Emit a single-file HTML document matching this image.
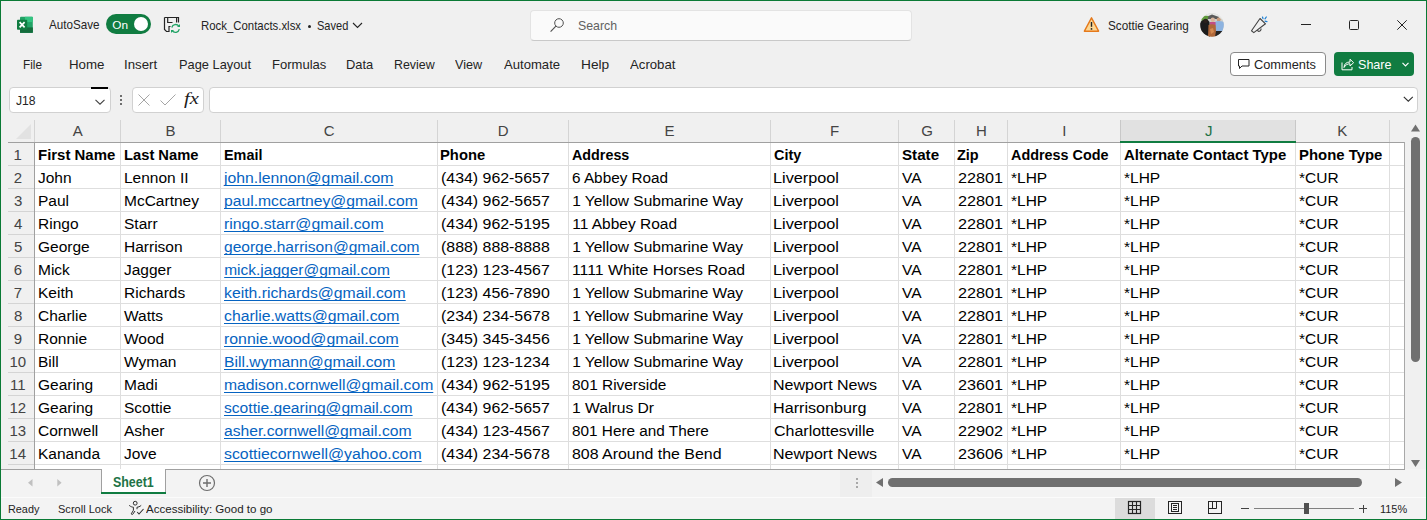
<!DOCTYPE html><html><head><meta charset="utf-8"><style>
html,body{margin:0;padding:0;}
body{width:1427px;height:520px;overflow:hidden;position:relative;background:#f0f0f0;font-family:"Liberation Sans", sans-serif;}
.t{position:absolute;white-space:nowrap;line-height:1;transform-origin:0 0;}
.r{position:absolute;box-sizing:border-box;}
svg{position:absolute;overflow:visible;}
</style></head><body>
<svg style="left:16px;top:16px" width="18" height="18" viewBox="0 0 18 18"><rect x="4" y="0.8" width="12.8" height="16" rx="1" fill="#21a366"/>
<rect x="9" y="0.8" width="7.8" height="5.3" fill="#33c481"/>
<rect x="4" y="11.5" width="12.8" height="5.3" fill="#107c41"/>
<rect x="4" y="11.5" width="12.8" height="5.3" fill="#185c37" opacity="0.5"/>
<rect x="1" y="3.8" width="10.2" height="10" rx="0.8" fill="#107c41"/>
<path d="M3.6 6.2 L8.6 11.4 M8.6 6.2 L3.6 11.4" stroke="#fff" stroke-width="1.7"/></svg>
<div class="t" style="left:49.00px;top:19.00px;font-size:12.7px;color:#242424;transform:scaleX(0.917717453150524);">AutoSave</div>
<div class="r" style="left:106px;top:14px;width:45px;height:20px;background:#107c41;border-radius:10px;"></div>
<div class="r" style="left:134px;top:17px;width:14px;height:14px;background:#fff;border-radius:50%;"></div>
<div class="t" style="left:112.21px;top:20.00px;font-size:11.8px;color:#fff;">On</div>
<svg style="left:155px;top:10px" width="35" height="30" viewBox="0 0 35 30"><path d="M9.5 7.5 H23.5 V12.5 M9.5 7.5 V19.5 L11.5 21.5 H14 V16.5 H15.5 M12.7 7.5 V12.5 H17.5 M21.6 7.5 V12.5" fill="none" stroke="#242424" stroke-width="1.2"/>
<path d="M16.8 17.5 A3.9 3.9 0 0 1 23.8 16.2" fill="none" stroke="#21a366" stroke-width="1.3"/>
<path d="M24.3 19.2 A3.9 3.9 0 0 1 17.2 20.6" fill="none" stroke="#21a366" stroke-width="1.3"/>
<path d="M25 14 V17 H22 Z" fill="#21a366"/>
<path d="M16 23 V20 H19 Z" fill="#21a366"/></svg>
<div class="t" style="left:200.69px;top:20.00px;font-size:12.7px;color:#242424;transform:scaleX(0.8979458695396102);">Rock_Contacts.xlsx</div>
<div class="r" style="left:308px;top:24.5px;width:3px;height:3px;background:#242424;border-radius:50%;"></div>
<div class="t" style="left:316.55px;top:20.00px;font-size:12.7px;color:#242424;transform:scaleX(0.8713524779990728);">Saved</div>
<svg style="left:352px;top:22px" width="11" height="7" viewBox="0 0 11 7"><path d="M1 1 L5.5 5.5 L10 1" fill="none" stroke="#242424" stroke-width="1.1"/></svg>
<div class="r" style="left:530px;top:10px;width:382px;height:31px;background:#fafafa;border:1px solid #e3e3e3;border-bottom-color:#c9c9c9;border-radius:4px;"></div>
<svg style="left:549px;top:17px" width="16" height="16" viewBox="0 0 16 16"><circle cx="10" cy="6" r="4.3" fill="none" stroke="#505050" stroke-width="1"/><path d="M6.9 9.1 L1.6 14.6" stroke="#505050" stroke-width="1.1"/></svg>
<div class="t" style="left:577.98px;top:20.00px;font-size:12.6px;color:#616161;transform:scaleX(0.9784022898777003);">Search</div>
<svg style="left:1083px;top:16px" width="17" height="17" viewBox="0 0 17 17"><path d="M8.5 1.8 L15.6 15.2 H1.4 Z" fill="#fcd794" stroke="#e5791b" stroke-width="1.4" stroke-linejoin="round"/><path d="M8.5 6 V10.8" stroke="#242424" stroke-width="1.4"/><circle cx="8.5" cy="12.9" r="0.9" fill="#242424"/></svg>
<div class="t" style="left:1108.41px;top:19.00px;font-size:13.0px;color:#242424;transform:scaleX(0.9019741320626277);">Scottie Gearing</div>
<svg style="left:1200px;top:12.5px" width="24" height="24" viewBox="0 0 24 24"><defs><clipPath id="av"><circle cx="12" cy="12" r="11.8"/></clipPath></defs>
<g clip-path="url(#av)">
<rect width="24" height="24" fill="#cfcfca"/>
<rect x="0" y="0" width="24" height="6" fill="#e6e8e6"/>
<path d="M6 4 L12 1.5 L19 4 L18 6 L7 6 Z" fill="#5a5a5a"/>
<path d="M0.5 6 Q3 1.5 8.5 3 L7.5 7 L2 8 Z" fill="#5f9a3c"/>
<path d="M0 10 Q3 5.5 7.5 6.5 L9.5 9 L10 24 L0 24 Z" fill="#1c1c1c"/>
<circle cx="5.5" cy="8" r="2.2" fill="#2a211c"/>
<circle cx="12.8" cy="6.8" r="2.2" fill="#d9b59c"/>
<path d="M10 9 L16 9 L16.5 14 L10 14 Z" fill="#c04d86"/>
<path d="M8.5 12 Q12 10.5 16.5 12.5 L17 24 L8 24 Z" fill="#b0683a"/>
<path d="M10 16 L13 15 L14 19 L11 21 Z" fill="#d48a50"/>
<circle cx="18.7" cy="6.5" r="2" fill="#c89a7c"/>
<path d="M15.5 8.5 Q19 7.5 24 9 L24 18 L16 18 Z" fill="#8db3e0"/>
<path d="M16 18 L24 18 L24 24 L15 24 Z" fill="#222"/>
</g></svg>
<svg style="left:1250px;top:16px" width="18" height="18" viewBox="0 0 18 18"><path d="M1.5 14.8 L10 2.5 L15.5 7.8 L3.8 16.6 Z" fill="none" stroke="#424242" stroke-width="1.1" stroke-linejoin="round"/><path d="M7.3 14.2 A1.9 1.9 0 1 0 10.8 12.4" fill="none" stroke="#424242" stroke-width="1.1"/><path d="M12.5 1 L13 2.6 M16.3 1 L15 2.8 M15 5.2 L17 5.6" stroke="#1a7fd4" stroke-width="1.2" stroke-linecap="round"/></svg>
<div class="r" style="left:1301px;top:24px;width:10px;height:1px;background:#242424;"></div>
<div class="r" style="left:1349px;top:20px;width:10px;height:10px;border:1px solid #242424;border-radius:1.5px;"></div>
<svg style="left:1397px;top:20px" width="10" height="10" viewBox="0 0 10 10"><path d="M0.3 0.3 L9.7 9.7 M9.7 0.3 L0.3 9.7" stroke="#242424" stroke-width="1"/></svg>
<div class="t" style="left:22.76px;top:58.00px;font-size:13.4px;color:#242424;transform:scaleX(0.8764900330561957);">File</div>
<div class="t" style="left:68.54px;top:58.00px;font-size:13.4px;color:#242424;transform:scaleX(0.9930661652368084);">Home</div>
<div class="t" style="left:123.81px;top:58.00px;font-size:13.4px;color:#242424;transform:scaleX(0.988805970149254);">Insert</div>
<div class="t" style="left:178.97px;top:58.00px;font-size:13.4px;color:#242424;transform:scaleX(0.9581387816793069);">Page Layout</div>
<div class="t" style="left:271.76px;top:58.00px;font-size:13.4px;color:#242424;transform:scaleX(0.9747558503777405);">Formulas</div>
<div class="t" style="left:346.17px;top:58.00px;font-size:13.4px;color:#242424;transform:scaleX(0.9631644732004995);">Data</div>
<div class="t" style="left:394.01px;top:58.00px;font-size:13.4px;color:#242424;transform:scaleX(0.9258395522388057);">Review</div>
<div class="t" style="left:454.77px;top:58.00px;font-size:13.4px;color:#242424;transform:scaleX(0.9415539126795927);">View</div>
<div class="t" style="left:504.00px;top:58.00px;font-size:13.4px;color:#242424;transform:scaleX(0.9785975781470012);">Automate</div>
<div class="t" style="left:581.20px;top:58.00px;font-size:13.4px;color:#242424;transform:scaleX(1.0246693991183975);">Help</div>
<div class="t" style="left:630.20px;top:58.00px;font-size:13.4px;color:#242424;transform:scaleX(0.9849010760152719);">Acrobat</div>
<div class="r" style="left:1230px;top:52px;width:96px;height:24px;background:#fff;border:1px solid #8a8a8a;border-radius:4px;"></div>
<svg style="left:1237px;top:58px" width="14" height="12" viewBox="0 0 14 12"><path d="M1.5 1.5 H12 V8 H5 L2.5 10.5 V8 H1.5 Z" fill="none" stroke="#242424" stroke-width="1" stroke-linejoin="round"/></svg>
<div class="t" style="left:1253.96px;top:58.00px;font-size:13.2px;color:#242424;transform:scaleX(0.9712918660287095);">Comments</div>
<div class="r" style="left:1334px;top:52px;width:80px;height:24px;background:#107c41;border-radius:4px;"></div>
<svg style="left:1341px;top:57px" width="14" height="14" viewBox="0 0 14 14"><path d="M1 5.5 V12.8 H11 V10" fill="none" stroke="#fff" stroke-width="1"/><path d="M3 10.5 C3.2 6.8 5.5 5 9 5 V2.2 L12.6 5.7 L9 9 V6.8 C6.5 6.8 4.5 7.8 3 10.5 Z" fill="none" stroke="#fff" stroke-width="1" stroke-linejoin="round"/></svg>
<div class="t" style="left:1357.77px;top:58.00px;font-size:13.4px;color:#fff;transform:scaleX(0.9379174168070141);">Share</div>
<svg style="left:1402px;top:62px" width="7" height="5" viewBox="0 0 7 5"><path d="M0.5 0.8 L3.5 3.8 L6.5 0.8" fill="none" stroke="#fff" stroke-width="1.2"/></svg>
<div class="r" style="left:9px;top:87px;width:102px;height:26px;background:#fff;border:1px solid #d1d1d1;border-radius:4px;"></div>
<div class="r" style="left:91px;top:87px;width:17px;height:1.5px;background:#000;"></div>
<div class="t" style="left:15.76px;top:95.00px;font-size:12.8px;color:#242424;transform:scaleX(0.95);">J18</div>
<svg style="left:95px;top:98.5px" width="10" height="6" viewBox="0 0 10 6"><path d="M0.5 0.8 L5 5.2 L9.5 0.8" fill="none" stroke="#424242" stroke-width="1.1"/></svg>
<div class="r" style="left:120px;top:95px;width:2px;height:2px;background:#6e6e6e;"></div>
<div class="r" style="left:120px;top:99px;width:2px;height:2px;background:#6e6e6e;"></div>
<div class="r" style="left:120px;top:103px;width:2px;height:2px;background:#6e6e6e;"></div>
<div class="r" style="left:132px;top:87px;width:72px;height:26px;background:#fff;border:1px solid #d1d1d1;border-radius:4px;"></div>
<svg style="left:138px;top:94px" width="12" height="12" viewBox="0 0 12 12"><path d="M0.5 0.5 L11.5 11.5 M11.5 0.5 L0.5 11.5" stroke="#a6a6a6" stroke-width="1"/></svg>
<svg style="left:160px;top:94px" width="16" height="12" viewBox="0 0 16 12"><path d="M0.5 6.5 L5 11 L15.5 0.5" fill="none" stroke="#a6a6a6" stroke-width="1"/></svg>
<div class="t" style="left:184.39px;top:90.00px;font-size:17.5px;color:#1a1a1a;font-style:italic;font-family:'Liberation Serif';transform:scaleX(1.1755102040816332);">fx</div>
<div class="r" style="left:209px;top:87px;width:1209px;height:26px;background:#fff;border:1px solid #d1d1d1;border-radius:4px;"></div>
<svg style="left:1403px;top:95.5px" width="11" height="6" viewBox="0 0 11 6"><path d="M0.8 0.8 L5.3 5.2 L9.8 0.8" fill="none" stroke="#303030" stroke-width="1.1"/></svg>
<div class="r" style="left:1120px;top:120px;width:175px;height:22px;background:#e1e1e1;"></div>
<div class="r" style="left:34px;top:142px;width:1371px;height:327px;background:#fff;"></div>
<div class="r" style="left:120px;top:120px;width:1px;height:22px;background:#d4d4d4;"></div>
<div class="r" style="left:120px;top:142px;width:1px;height:327px;background:#dedede;"></div>
<div class="r" style="left:220px;top:120px;width:1px;height:22px;background:#d4d4d4;"></div>
<div class="r" style="left:220px;top:142px;width:1px;height:327px;background:#dedede;"></div>
<div class="r" style="left:437px;top:120px;width:1px;height:22px;background:#d4d4d4;"></div>
<div class="r" style="left:437px;top:142px;width:1px;height:327px;background:#dedede;"></div>
<div class="r" style="left:568px;top:120px;width:1px;height:22px;background:#d4d4d4;"></div>
<div class="r" style="left:568px;top:142px;width:1px;height:327px;background:#dedede;"></div>
<div class="r" style="left:770px;top:120px;width:1px;height:22px;background:#d4d4d4;"></div>
<div class="r" style="left:770px;top:142px;width:1px;height:327px;background:#dedede;"></div>
<div class="r" style="left:898px;top:120px;width:1px;height:22px;background:#d4d4d4;"></div>
<div class="r" style="left:898px;top:142px;width:1px;height:327px;background:#dedede;"></div>
<div class="r" style="left:954px;top:120px;width:1px;height:22px;background:#d4d4d4;"></div>
<div class="r" style="left:954px;top:142px;width:1px;height:327px;background:#dedede;"></div>
<div class="r" style="left:1007px;top:120px;width:1px;height:22px;background:#d4d4d4;"></div>
<div class="r" style="left:1007px;top:142px;width:1px;height:327px;background:#dedede;"></div>
<div class="r" style="left:1120px;top:120px;width:1px;height:22px;background:#d4d4d4;"></div>
<div class="r" style="left:1120px;top:142px;width:1px;height:327px;background:#dedede;"></div>
<div class="r" style="left:1295px;top:120px;width:1px;height:22px;background:#d4d4d4;"></div>
<div class="r" style="left:1295px;top:142px;width:1px;height:327px;background:#dedede;"></div>
<div class="r" style="left:1389px;top:120px;width:1px;height:22px;background:#d4d4d4;"></div>
<div class="r" style="left:1389px;top:142px;width:1px;height:327px;background:#dedede;"></div>
<div class="r" style="left:34px;top:165px;width:1371px;height:1px;background:#dedede;"></div>
<div class="r" style="left:8px;top:165px;width:26px;height:1px;background:#d4d4d4;"></div>
<div class="r" style="left:34px;top:188px;width:1371px;height:1px;background:#dedede;"></div>
<div class="r" style="left:8px;top:188px;width:26px;height:1px;background:#d4d4d4;"></div>
<div class="r" style="left:34px;top:211px;width:1371px;height:1px;background:#dedede;"></div>
<div class="r" style="left:8px;top:211px;width:26px;height:1px;background:#d4d4d4;"></div>
<div class="r" style="left:34px;top:234px;width:1371px;height:1px;background:#dedede;"></div>
<div class="r" style="left:8px;top:234px;width:26px;height:1px;background:#d4d4d4;"></div>
<div class="r" style="left:34px;top:257px;width:1371px;height:1px;background:#dedede;"></div>
<div class="r" style="left:8px;top:257px;width:26px;height:1px;background:#d4d4d4;"></div>
<div class="r" style="left:34px;top:280px;width:1371px;height:1px;background:#dedede;"></div>
<div class="r" style="left:8px;top:280px;width:26px;height:1px;background:#d4d4d4;"></div>
<div class="r" style="left:34px;top:303px;width:1371px;height:1px;background:#dedede;"></div>
<div class="r" style="left:8px;top:303px;width:26px;height:1px;background:#d4d4d4;"></div>
<div class="r" style="left:34px;top:326px;width:1371px;height:1px;background:#dedede;"></div>
<div class="r" style="left:8px;top:326px;width:26px;height:1px;background:#d4d4d4;"></div>
<div class="r" style="left:34px;top:349px;width:1371px;height:1px;background:#dedede;"></div>
<div class="r" style="left:8px;top:349px;width:26px;height:1px;background:#d4d4d4;"></div>
<div class="r" style="left:34px;top:372px;width:1371px;height:1px;background:#dedede;"></div>
<div class="r" style="left:8px;top:372px;width:26px;height:1px;background:#d4d4d4;"></div>
<div class="r" style="left:34px;top:395px;width:1371px;height:1px;background:#dedede;"></div>
<div class="r" style="left:8px;top:395px;width:26px;height:1px;background:#d4d4d4;"></div>
<div class="r" style="left:34px;top:418px;width:1371px;height:1px;background:#dedede;"></div>
<div class="r" style="left:8px;top:418px;width:26px;height:1px;background:#d4d4d4;"></div>
<div class="r" style="left:34px;top:441px;width:1371px;height:1px;background:#dedede;"></div>
<div class="r" style="left:8px;top:441px;width:26px;height:1px;background:#d4d4d4;"></div>
<div class="r" style="left:34px;top:464px;width:1371px;height:1px;background:#dedede;"></div>
<div class="r" style="left:8px;top:464px;width:26px;height:1px;background:#d4d4d4;"></div>
<div class="r" style="left:8px;top:142px;width:1397px;height:1px;background:#a0a0a0;"></div>
<div class="r" style="left:1120px;top:141px;width:176px;height:2px;background:#107c41;"></div>
<div class="r" style="left:1120px;top:120px;width:1px;height:21px;background:#c8c8c8;"></div>
<div class="r" style="left:1295px;top:120px;width:1px;height:21px;background:#c8c8c8;"></div>
<div class="r" style="left:34px;top:120px;width:1px;height:22px;background:#d4d4d4;"></div>
<div class="r" style="left:34px;top:142px;width:1px;height:327px;background:#a0a0a0;"></div>
<div class="r" style="left:1404px;top:142px;width:1px;height:328px;background:#a8a8a8;"></div>
<svg style="left:16px;top:124px" width="15" height="15" viewBox="0 0 15 15"><path d="M15 0 V15 H0 Z" fill="#e2e2e2"/></svg>
<div class="t" style="left:72.85px;top:123.00px;font-size:15.0px;color:#444;">A</div>
<div class="t" style="left:165.62px;top:123.00px;font-size:15.0px;color:#444;">B</div>
<div class="t" style="left:323.82px;top:123.00px;font-size:15.0px;color:#444;">C</div>
<div class="t" style="left:497.68px;top:123.00px;font-size:15.0px;color:#444;">D</div>
<div class="t" style="left:664.55px;top:123.00px;font-size:15.0px;color:#444;">E</div>
<div class="t" style="left:829.92px;top:123.00px;font-size:15.0px;color:#444;">F</div>
<div class="t" style="left:921.17px;top:123.00px;font-size:15.0px;color:#444;">G</div>
<div class="t" style="left:975.90px;top:123.00px;font-size:15.0px;color:#444;">H</div>
<div class="t" style="left:1062.20px;top:123.00px;font-size:15.0px;color:#444;">I</div>
<div class="t" style="left:1204.92px;top:123.00px;font-size:15.0px;color:#1e7145;">J</div>
<div class="t" style="left:1337.33px;top:123.00px;font-size:15.0px;color:#444;">K</div>
<div class="t" style="left:13.57px;top:147.00px;font-size:15.0px;color:#444;">1</div>
<div class="t" style="left:13.80px;top:170.00px;font-size:15.0px;color:#444;">2</div>
<div class="t" style="left:13.88px;top:193.00px;font-size:15.0px;color:#444;">3</div>
<div class="t" style="left:13.88px;top:216.00px;font-size:15.0px;color:#444;">4</div>
<div class="t" style="left:13.88px;top:239.00px;font-size:15.0px;color:#444;">5</div>
<div class="t" style="left:13.80px;top:262.00px;font-size:15.0px;color:#444;">6</div>
<div class="t" style="left:13.80px;top:285.00px;font-size:15.0px;color:#444;">7</div>
<div class="t" style="left:13.88px;top:308.00px;font-size:15.0px;color:#444;">8</div>
<div class="t" style="left:13.80px;top:331.00px;font-size:15.0px;color:#444;">9</div>
<div class="t" style="left:9.38px;top:354.00px;font-size:15.0px;color:#444;">10</div>
<div class="t" style="left:9.97px;top:377.00px;font-size:15.0px;color:#444;">11</div>
<div class="t" style="left:9.45px;top:400.00px;font-size:15.0px;color:#444;">12</div>
<div class="t" style="left:9.38px;top:423.00px;font-size:15.0px;color:#444;">13</div>
<div class="t" style="left:9.30px;top:446.00px;font-size:15.0px;color:#444;">14</div>
<div class="t" style="left:37.75px;top:147.00px;font-size:15.5px;color:#000;font-weight:bold;transform:scaleX(0.9639168685451998);">First Name</div>
<div class="t" style="left:123.57px;top:147.00px;font-size:15.5px;color:#000;font-weight:bold;transform:scaleX(0.9501466275659826);">Last Name</div>
<div class="t" style="left:223.79px;top:147.00px;font-size:15.5px;color:#000;font-weight:bold;transform:scaleX(0.9282162437842657);">Email</div>
<div class="t" style="left:440.47px;top:147.00px;font-size:15.5px;color:#000;font-weight:bold;transform:scaleX(0.9535265172225265);">Phone</div>
<div class="t" style="left:571.77px;top:147.00px;font-size:15.5px;color:#000;font-weight:bold;transform:scaleX(0.9242386932611008);">Address</div>
<div class="t" style="left:773.62px;top:147.00px;font-size:15.5px;color:#000;font-weight:bold;transform:scaleX(0.9291725105189341);">City</div>
<div class="t" style="left:901.64px;top:147.00px;font-size:15.5px;color:#000;font-weight:bold;transform:scaleX(0.9785849823800494);">State</div>
<div class="t" style="left:957.17px;top:147.00px;font-size:15.5px;color:#000;font-weight:bold;transform:scaleX(0.9339048048725438);">Zip</div>
<div class="t" style="left:1010.57px;top:147.00px;font-size:15.5px;color:#000;font-weight:bold;transform:scaleX(0.927840007691938);">Address Code</div>
<div class="t" style="left:1124.25px;top:147.00px;font-size:15.5px;color:#000;font-weight:bold;transform:scaleX(0.9626689743666256);">Alternate Contact Type</div>
<div class="t" style="left:1298.56px;top:147.00px;font-size:15.5px;color:#000;font-weight:bold;transform:scaleX(0.9612785710088746);">Phone Type</div>
<div class="t" style="left:38.00px;top:170.00px;font-size:15.5px;color:#000;">John</div>
<div class="t" style="left:124.00px;top:170.00px;font-size:15.5px;color:#000;">Lennon II</div>
<div class="t" style="left:224.20px;top:170.00px;font-size:15.5px;color:#0563c1;transform:scaleX(1.0178904951378558);text-decoration:underline;text-underline-offset:2px;text-decoration-skip-ink:none;">john.lennon@gmail.com</div>
<div class="t" style="left:441.00px;top:170.00px;font-size:15.5px;color:#000;transform:scaleX(1.026);">(434) 962-5657</div>
<div class="t" style="left:571.94px;top:170.00px;font-size:15.5px;color:#000;transform:scaleX(0.9870863177706903);">6 Abbey Road</div>
<div class="t" style="left:772.80px;top:170.00px;font-size:15.5px;color:#000;transform:scaleX(1.0477683359458791);">Liverpool</div>
<div class="t" style="left:902.00px;top:170.00px;font-size:15.5px;color:#000;">VA</div>
<div class="t" style="left:958.49px;top:170.00px;font-size:15.5px;color:#000;transform:scaleX(1.0471834376504574);">22801</div>
<div class="t" style="left:1011.00px;top:170.00px;font-size:15.5px;color:#000;">*LHP</div>
<div class="t" style="left:1124.00px;top:170.00px;font-size:15.5px;color:#000;">*LHP</div>
<div class="t" style="left:1299.00px;top:170.00px;font-size:15.5px;color:#000;">*CUR</div>
<div class="t" style="left:38.00px;top:193.00px;font-size:15.5px;color:#000;">Paul</div>
<div class="t" style="left:124.00px;top:193.00px;font-size:15.5px;color:#000;">McCartney</div>
<div class="t" style="left:224.20px;top:193.00px;font-size:15.5px;color:#0563c1;transform:scaleX(1.0116669597721857);text-decoration:underline;text-underline-offset:2px;text-decoration-skip-ink:none;">paul.mccartney@gmail.com</div>
<div class="t" style="left:441.00px;top:193.00px;font-size:15.5px;color:#000;transform:scaleX(1.026);">(434) 962-5657</div>
<div class="t" style="left:572.16px;top:193.00px;font-size:15.5px;color:#000;">1 Yellow Submarine Way</div>
<div class="t" style="left:772.80px;top:193.00px;font-size:15.5px;color:#000;transform:scaleX(1.0477683359458791);">Liverpool</div>
<div class="t" style="left:902.00px;top:193.00px;font-size:15.5px;color:#000;">VA</div>
<div class="t" style="left:958.49px;top:193.00px;font-size:15.5px;color:#000;transform:scaleX(1.0471834376504574);">22801</div>
<div class="t" style="left:1011.00px;top:193.00px;font-size:15.5px;color:#000;">*LHP</div>
<div class="t" style="left:1124.00px;top:193.00px;font-size:15.5px;color:#000;">*LHP</div>
<div class="t" style="left:1299.00px;top:193.00px;font-size:15.5px;color:#000;">*CUR</div>
<div class="t" style="left:38.00px;top:216.00px;font-size:15.5px;color:#000;">Ringo</div>
<div class="t" style="left:124.00px;top:216.00px;font-size:15.5px;color:#000;">Starr</div>
<div class="t" style="left:224.20px;top:216.00px;font-size:15.5px;color:#0563c1;transform:scaleX(1.0221867073897484);text-decoration:underline;text-underline-offset:2px;text-decoration-skip-ink:none;">ringo.starr@gmail.com</div>
<div class="t" style="left:441.00px;top:216.00px;font-size:15.5px;color:#000;transform:scaleX(1.026);">(434) 962-5195</div>
<div class="t" style="left:572.16px;top:216.00px;font-size:15.5px;color:#000;">11 Abbey Road</div>
<div class="t" style="left:772.80px;top:216.00px;font-size:15.5px;color:#000;transform:scaleX(1.0477683359458791);">Liverpool</div>
<div class="t" style="left:902.00px;top:216.00px;font-size:15.5px;color:#000;">VA</div>
<div class="t" style="left:958.49px;top:216.00px;font-size:15.5px;color:#000;transform:scaleX(1.0471834376504574);">22801</div>
<div class="t" style="left:1011.00px;top:216.00px;font-size:15.5px;color:#000;">*LHP</div>
<div class="t" style="left:1124.00px;top:216.00px;font-size:15.5px;color:#000;">*LHP</div>
<div class="t" style="left:1299.00px;top:216.00px;font-size:15.5px;color:#000;">*CUR</div>
<div class="t" style="left:38.00px;top:239.00px;font-size:15.5px;color:#000;">George</div>
<div class="t" style="left:124.00px;top:239.00px;font-size:15.5px;color:#000;">Harrison</div>
<div class="t" style="left:224.20px;top:239.00px;font-size:15.5px;color:#0563c1;transform:scaleX(1.0029144797381138);text-decoration:underline;text-underline-offset:2px;text-decoration-skip-ink:none;">george.harrison@gmail.com</div>
<div class="t" style="left:441.00px;top:239.00px;font-size:15.5px;color:#000;transform:scaleX(1.026);">(888) 888-8888</div>
<div class="t" style="left:572.16px;top:239.00px;font-size:15.5px;color:#000;">1 Yellow Submarine Way</div>
<div class="t" style="left:772.80px;top:239.00px;font-size:15.5px;color:#000;transform:scaleX(1.0477683359458791);">Liverpool</div>
<div class="t" style="left:902.00px;top:239.00px;font-size:15.5px;color:#000;">VA</div>
<div class="t" style="left:958.49px;top:239.00px;font-size:15.5px;color:#000;transform:scaleX(1.0471834376504574);">22801</div>
<div class="t" style="left:1011.00px;top:239.00px;font-size:15.5px;color:#000;">*LHP</div>
<div class="t" style="left:1124.00px;top:239.00px;font-size:15.5px;color:#000;">*LHP</div>
<div class="t" style="left:1299.00px;top:239.00px;font-size:15.5px;color:#000;">*CUR</div>
<div class="t" style="left:38.00px;top:262.00px;font-size:15.5px;color:#000;">Mick</div>
<div class="t" style="left:124.00px;top:262.00px;font-size:15.5px;color:#000;">Jagger</div>
<div class="t" style="left:224.20px;top:262.00px;font-size:15.5px;color:#0563c1;text-decoration:underline;text-underline-offset:2px;text-decoration-skip-ink:none;">mick.jagger@gmail.com</div>
<div class="t" style="left:441.00px;top:262.00px;font-size:15.5px;color:#000;transform:scaleX(1.026);">(123) 123-4567</div>
<div class="t" style="left:572.14px;top:262.00px;font-size:15.5px;color:#000;transform:scaleX(1.0191158900836321);">1111 White Horses Road</div>
<div class="t" style="left:772.80px;top:262.00px;font-size:15.5px;color:#000;transform:scaleX(1.0477683359458791);">Liverpool</div>
<div class="t" style="left:902.00px;top:262.00px;font-size:15.5px;color:#000;">VA</div>
<div class="t" style="left:958.49px;top:262.00px;font-size:15.5px;color:#000;transform:scaleX(1.0471834376504574);">22801</div>
<div class="t" style="left:1011.00px;top:262.00px;font-size:15.5px;color:#000;">*LHP</div>
<div class="t" style="left:1124.00px;top:262.00px;font-size:15.5px;color:#000;">*LHP</div>
<div class="t" style="left:1299.00px;top:262.00px;font-size:15.5px;color:#000;">*CUR</div>
<div class="t" style="left:38.00px;top:285.00px;font-size:15.5px;color:#000;">Keith</div>
<div class="t" style="left:124.00px;top:285.00px;font-size:15.5px;color:#000;">Richards</div>
<div class="t" style="left:224.20px;top:285.00px;font-size:15.5px;color:#0563c1;transform:scaleX(1.0177093575473386);text-decoration:underline;text-underline-offset:2px;text-decoration-skip-ink:none;">keith.richards@gmail.com</div>
<div class="t" style="left:441.00px;top:285.00px;font-size:15.5px;color:#000;transform:scaleX(1.026);">(123) 456-7890</div>
<div class="t" style="left:572.16px;top:285.00px;font-size:15.5px;color:#000;">1 Yellow Submarine Way</div>
<div class="t" style="left:772.80px;top:285.00px;font-size:15.5px;color:#000;transform:scaleX(1.0477683359458791);">Liverpool</div>
<div class="t" style="left:902.00px;top:285.00px;font-size:15.5px;color:#000;">VA</div>
<div class="t" style="left:958.49px;top:285.00px;font-size:15.5px;color:#000;transform:scaleX(1.0471834376504574);">22801</div>
<div class="t" style="left:1011.00px;top:285.00px;font-size:15.5px;color:#000;">*LHP</div>
<div class="t" style="left:1124.00px;top:285.00px;font-size:15.5px;color:#000;">*LHP</div>
<div class="t" style="left:1299.00px;top:285.00px;font-size:15.5px;color:#000;">*CUR</div>
<div class="t" style="left:38.00px;top:308.00px;font-size:15.5px;color:#000;">Charlie</div>
<div class="t" style="left:124.00px;top:308.00px;font-size:15.5px;color:#000;">Watts</div>
<div class="t" style="left:224.20px;top:308.00px;font-size:15.5px;color:#0563c1;transform:scaleX(1.017345689663371);text-decoration:underline;text-underline-offset:2px;text-decoration-skip-ink:none;">charlie.watts@gmail.com</div>
<div class="t" style="left:441.00px;top:308.00px;font-size:15.5px;color:#000;transform:scaleX(1.026);">(234) 234-5678</div>
<div class="t" style="left:572.16px;top:308.00px;font-size:15.5px;color:#000;">1 Yellow Submarine Way</div>
<div class="t" style="left:772.80px;top:308.00px;font-size:15.5px;color:#000;transform:scaleX(1.0477683359458791);">Liverpool</div>
<div class="t" style="left:902.00px;top:308.00px;font-size:15.5px;color:#000;">VA</div>
<div class="t" style="left:958.49px;top:308.00px;font-size:15.5px;color:#000;transform:scaleX(1.0471834376504574);">22801</div>
<div class="t" style="left:1011.00px;top:308.00px;font-size:15.5px;color:#000;">*LHP</div>
<div class="t" style="left:1124.00px;top:308.00px;font-size:15.5px;color:#000;">*LHP</div>
<div class="t" style="left:1299.00px;top:308.00px;font-size:15.5px;color:#000;">*CUR</div>
<div class="t" style="left:38.00px;top:331.00px;font-size:15.5px;color:#000;">Ronnie</div>
<div class="t" style="left:124.00px;top:331.00px;font-size:15.5px;color:#000;">Wood</div>
<div class="t" style="left:224.20px;top:331.00px;font-size:15.5px;color:#0563c1;transform:scaleX(1.0227593408156515);text-decoration:underline;text-underline-offset:2px;text-decoration-skip-ink:none;">ronnie.wood@gmail.com</div>
<div class="t" style="left:441.00px;top:331.00px;font-size:15.5px;color:#000;transform:scaleX(1.026);">(345) 345-3456</div>
<div class="t" style="left:572.16px;top:331.00px;font-size:15.5px;color:#000;">1 Yellow Submarine Way</div>
<div class="t" style="left:772.80px;top:331.00px;font-size:15.5px;color:#000;transform:scaleX(1.0477683359458791);">Liverpool</div>
<div class="t" style="left:902.00px;top:331.00px;font-size:15.5px;color:#000;">VA</div>
<div class="t" style="left:958.49px;top:331.00px;font-size:15.5px;color:#000;transform:scaleX(1.0471834376504574);">22801</div>
<div class="t" style="left:1011.00px;top:331.00px;font-size:15.5px;color:#000;">*LHP</div>
<div class="t" style="left:1124.00px;top:331.00px;font-size:15.5px;color:#000;">*LHP</div>
<div class="t" style="left:1299.00px;top:331.00px;font-size:15.5px;color:#000;">*CUR</div>
<div class="t" style="left:38.00px;top:354.00px;font-size:15.5px;color:#000;">Bill</div>
<div class="t" style="left:124.00px;top:354.00px;font-size:15.5px;color:#000;">Wyman</div>
<div class="t" style="left:224.20px;top:354.00px;font-size:15.5px;color:#0563c1;transform:scaleX(1.0132703366661675);text-decoration:underline;text-underline-offset:2px;text-decoration-skip-ink:none;">Bill.wymann@gmail.com</div>
<div class="t" style="left:441.00px;top:354.00px;font-size:15.5px;color:#000;transform:scaleX(1.026);">(123) 123-1234</div>
<div class="t" style="left:572.16px;top:354.00px;font-size:15.5px;color:#000;">1 Yellow Submarine Way</div>
<div class="t" style="left:772.80px;top:354.00px;font-size:15.5px;color:#000;transform:scaleX(1.0477683359458791);">Liverpool</div>
<div class="t" style="left:902.00px;top:354.00px;font-size:15.5px;color:#000;">VA</div>
<div class="t" style="left:958.49px;top:354.00px;font-size:15.5px;color:#000;transform:scaleX(1.0471834376504574);">22801</div>
<div class="t" style="left:1011.00px;top:354.00px;font-size:15.5px;color:#000;">*LHP</div>
<div class="t" style="left:1124.00px;top:354.00px;font-size:15.5px;color:#000;">*LHP</div>
<div class="t" style="left:1299.00px;top:354.00px;font-size:15.5px;color:#000;">*CUR</div>
<div class="t" style="left:38.00px;top:377.00px;font-size:15.5px;color:#000;">Gearing</div>
<div class="t" style="left:124.00px;top:377.00px;font-size:15.5px;color:#000;">Madi</div>
<div class="t" style="left:224.20px;top:377.00px;font-size:15.5px;color:#0563c1;transform:scaleX(1.0154710138335485);text-decoration:underline;text-underline-offset:2px;text-decoration-skip-ink:none;">madison.cornwell@gmail.com</div>
<div class="t" style="left:441.00px;top:377.00px;font-size:15.5px;color:#000;transform:scaleX(1.026);">(434) 962-5195</div>
<div class="t" style="left:571.88px;top:377.00px;font-size:15.5px;color:#000;transform:scaleX(0.9950248756218905);">801 Riverside</div>
<div class="t" style="left:773.02px;top:377.00px;font-size:15.5px;color:#000;transform:scaleX(1.032863849765259);">Newport News</div>
<div class="t" style="left:902.00px;top:377.00px;font-size:15.5px;color:#000;">VA</div>
<div class="t" style="left:958.49px;top:377.00px;font-size:15.5px;color:#000;transform:scaleX(1.0471834376504574);">23601</div>
<div class="t" style="left:1011.00px;top:377.00px;font-size:15.5px;color:#000;">*LHP</div>
<div class="t" style="left:1124.00px;top:377.00px;font-size:15.5px;color:#000;">*LHP</div>
<div class="t" style="left:1299.00px;top:377.00px;font-size:15.5px;color:#000;">*CUR</div>
<div class="t" style="left:38.00px;top:400.00px;font-size:15.5px;color:#000;">Gearing</div>
<div class="t" style="left:124.00px;top:400.00px;font-size:15.5px;color:#000;">Scottie</div>
<div class="t" style="left:224.20px;top:400.00px;font-size:15.5px;color:#0563c1;transform:scaleX(1.007615299050227);text-decoration:underline;text-underline-offset:2px;text-decoration-skip-ink:none;">scottie.gearing@gmail.com</div>
<div class="t" style="left:441.00px;top:400.00px;font-size:15.5px;color:#000;transform:scaleX(1.026);">(434) 962-5657</div>
<div class="t" style="left:571.75px;top:400.00px;font-size:15.5px;color:#000;transform:scaleX(1.0104179741433412);">1 Walrus Dr</div>
<div class="t" style="left:773.01px;top:400.00px;font-size:15.5px;color:#000;transform:scaleX(1.0420956302905515);">Harrisonburg</div>
<div class="t" style="left:902.00px;top:400.00px;font-size:15.5px;color:#000;">VA</div>
<div class="t" style="left:958.49px;top:400.00px;font-size:15.5px;color:#000;transform:scaleX(1.0471834376504574);">22801</div>
<div class="t" style="left:1011.00px;top:400.00px;font-size:15.5px;color:#000;">*LHP</div>
<div class="t" style="left:1124.00px;top:400.00px;font-size:15.5px;color:#000;">*LHP</div>
<div class="t" style="left:1299.00px;top:400.00px;font-size:15.5px;color:#000;">*CUR</div>
<div class="t" style="left:38.00px;top:423.00px;font-size:15.5px;color:#000;">Cornwell</div>
<div class="t" style="left:124.00px;top:423.00px;font-size:15.5px;color:#000;">Asher</div>
<div class="t" style="left:224.20px;top:423.00px;font-size:15.5px;color:#0563c1;transform:scaleX(1.0111057325903392);text-decoration:underline;text-underline-offset:2px;text-decoration-skip-ink:none;">asher.cornwell@gmail.com</div>
<div class="t" style="left:441.00px;top:423.00px;font-size:15.5px;color:#000;transform:scaleX(1.026);">(434) 123-4567</div>
<div class="t" style="left:571.89px;top:423.00px;font-size:15.5px;color:#000;transform:scaleX(0.988518316019683);">801 Here and There</div>
<div class="t" style="left:773.50px;top:423.00px;font-size:15.5px;color:#000;transform:scaleX(1.0307988952003762);">Charlottesville</div>
<div class="t" style="left:902.00px;top:423.00px;font-size:15.5px;color:#000;">VA</div>
<div class="t" style="left:958.49px;top:423.00px;font-size:15.5px;color:#000;transform:scaleX(1.0471834376504574);">22902</div>
<div class="t" style="left:1011.00px;top:423.00px;font-size:15.5px;color:#000;">*LHP</div>
<div class="t" style="left:1124.00px;top:423.00px;font-size:15.5px;color:#000;">*LHP</div>
<div class="t" style="left:1299.00px;top:423.00px;font-size:15.5px;color:#000;">*CUR</div>
<div class="t" style="left:38.00px;top:446.00px;font-size:15.5px;color:#000;">Kananda</div>
<div class="t" style="left:124.00px;top:446.00px;font-size:15.5px;color:#000;">Jove</div>
<div class="t" style="left:224.20px;top:446.00px;font-size:15.5px;color:#0563c1;transform:scaleX(1.0227474449308034);text-decoration:underline;text-underline-offset:2px;text-decoration-skip-ink:none;">scottiecornwell@yahoo.com</div>
<div class="t" style="left:441.00px;top:446.00px;font-size:15.5px;color:#000;transform:scaleX(1.026);">(434) 234-5678</div>
<div class="t" style="left:571.86px;top:446.00px;font-size:15.5px;color:#000;transform:scaleX(1.026424528629466);">808 Around the Bend</div>
<div class="t" style="left:773.02px;top:446.00px;font-size:15.5px;color:#000;transform:scaleX(1.032863849765259);">Newport News</div>
<div class="t" style="left:902.00px;top:446.00px;font-size:15.5px;color:#000;">VA</div>
<div class="t" style="left:958.49px;top:446.00px;font-size:15.5px;color:#000;transform:scaleX(1.0432905624175561);">23606</div>
<div class="t" style="left:1011.00px;top:446.00px;font-size:15.5px;color:#000;">*LHP</div>
<div class="t" style="left:1124.00px;top:446.00px;font-size:15.5px;color:#000;">*LHP</div>
<div class="t" style="left:1299.00px;top:446.00px;font-size:15.5px;color:#000;">*CUR</div>
<svg style="left:1411px;top:124px" width="9" height="8" viewBox="0 0 9 8"><path d="M4.5 0.5 L9 7.5 H0 Z" fill="#707070"/></svg>
<div class="r" style="left:1411px;top:137px;width:9px;height:225px;background:#707070;border-radius:4.5px;"></div>
<svg style="left:1411px;top:459.5px" width="9" height="7" viewBox="0 0 9 7"><path d="M4.5 7 L9 0 H0 Z" fill="#707070"/></svg>
<div class="r" style="left:1px;top:469px;width:1425px;height:28px;background:#f3f3f3;"></div>
<div class="r" style="left:1px;top:469px;width:1404px;height:1px;background:#a0a0a0;"></div>
<svg style="left:28px;top:478.8px" width="5" height="7.4" viewBox="0 0 5 7.4"><path d="M4.5 0 V7.4 L0 3.7 Z" fill="#c0c0c0"/></svg>
<svg style="left:57px;top:478.8px" width="5" height="7.4" viewBox="0 0 5 7.4"><path d="M0.3 0 V7.4 L4.6 3.7 Z" fill="#c0c0c0"/></svg>
<div class="r" style="left:101px;top:469px;width:65px;height:25px;background:#fff;border-left:1px solid #a0a0a0;border-right:1px solid #a0a0a0;"></div>
<div class="r" style="left:101px;top:492px;width:65px;height:2px;background:#107c41;"></div>
<div class="t" style="left:112.63px;top:476.00px;font-size:13.8px;color:#217346;font-weight:bold;transform:scaleX(0.9001710324961741);">Sheet1</div>
<svg style="left:198px;top:474px" width="18" height="18" viewBox="0 0 18 18"><circle cx="9" cy="9" r="7.5" fill="none" stroke="#6e6e6e" stroke-width="1.2"/><path d="M9 5 V13 M5 9 H13" stroke="#6e6e6e" stroke-width="1.4"/></svg>
<div class="r" style="left:840px;top:470px;width:32px;height:27px;background:#eeeeee;"></div>
<div class="r" style="left:856px;top:478px;width:2px;height:2px;background:#a8a8a8;"></div>
<div class="r" style="left:856px;top:482px;width:2px;height:2px;background:#a8a8a8;"></div>
<div class="r" style="left:856px;top:486px;width:2px;height:2px;background:#a8a8a8;"></div>
<svg style="left:876px;top:478px" width="7" height="9" viewBox="0 0 7 9"><path d="M7 0 V9 L0 4.5 Z" fill="#707070"/></svg>
<div class="r" style="left:888px;top:478px;width:474px;height:9px;background:#707070;border-radius:4.5px;"></div>
<svg style="left:1395px;top:478px" width="7" height="9" viewBox="0 0 7 9"><path d="M0 0 V9 L7 4.5 Z" fill="#707070"/></svg>
<div class="r" style="left:1px;top:497px;width:1425px;height:22px;background:#f3f3f3;"></div>
<div class="r" style="left:1px;top:497px;width:1425px;height:1px;background:#fbfbfb;"></div>
<div class="t" style="left:7.73px;top:503.00px;font-size:11.6px;color:#242424;transform:scaleX(0.9356976316112408);">Ready</div>
<div class="t" style="left:57.85px;top:503.00px;font-size:11.6px;color:#242424;transform:scaleX(0.9529068110572815);">Scroll Lock</div>
<svg style="left:128px;top:500px" width="17" height="16" viewBox="0 0 17 16"><circle cx="7.2" cy="3.2" r="1.9" fill="none" stroke="#303030" stroke-width="1"/><path d="M1.2 5.4 C2.8 6.8 4.6 7.2 5.4 7.2 V10.3 L3.3 13.8 C3.5 14.6 4.3 14.8 4.8 14.2 L7 11 M13.2 5.4 C11.8 6.6 10.2 7.2 9 7.2 V9.2" fill="none" stroke="#303030" stroke-width="1" stroke-linejoin="round"/><path d="M9.2 12 L11 14 L15.5 9" fill="none" stroke="#303030" stroke-width="1.1"/></svg>
<div class="t" style="left:146.40px;top:503.00px;font-size:11.6px;color:#242424;transform:scaleX(0.9963968519864723);">Accessibility: Good to go</div>
<div class="r" style="left:1115px;top:498px;width:40px;height:21px;background:#dcdcdc;"></div>
<svg style="left:1128px;top:501px" width="13" height="13" viewBox="0 0 13 13"><rect x="0.5" y="0.5" width="12" height="12" fill="none" stroke="#242424" stroke-width="1.2"/><path d="M4.5 0.5 V12.5 M8.5 0.5 V12.5 M0.5 4.5 H12.5 M0.5 8.5 H12.5" stroke="#242424" stroke-width="1.1"/></svg>
<svg style="left:1168px;top:501px" width="14" height="13" viewBox="0 0 14 13"><rect x="0.5" y="0.5" width="13" height="12" fill="none" stroke="#242424"/><rect x="3.5" y="2.5" width="7" height="8" fill="none" stroke="#242424"/><path d="M5 4.5 H9 M5 6.5 H9 M5 8.5 H9" stroke="#242424"/></svg>
<svg style="left:1208px;top:501px" width="14" height="13" viewBox="0 0 14 13"><rect x="0.5" y="0.5" width="13" height="12" fill="none" stroke="#242424"/><path d="M0.5 7.5 H8.5 V0.5 M4.5 0.5 V7.5" fill="none" stroke="#242424"/></svg>
<div class="r" style="left:1241px;top:508px;width:8px;height:1px;background:#424242;"></div>
<div class="r" style="left:1254px;top:508px;width:100px;height:1px;background:#808080;"></div>
<div class="r" style="left:1304px;top:503px;width:5px;height:11px;background:#505050;"></div>
<div class="r" style="left:1359px;top:508px;width:8px;height:1px;background:#424242;"></div>
<div class="r" style="left:1362.5px;top:504.5px;width:1px;height:8px;background:#424242;"></div>
<div class="t" style="left:1379.83px;top:503.00px;font-size:11.6px;color:#242424;transform:scaleX(0.9420922450167273);">115%</div>
<div class="r" style="left:0px;top:0px;width:1427px;height:520px;border:1px solid #0a7a35;"></div>
</body></html>
